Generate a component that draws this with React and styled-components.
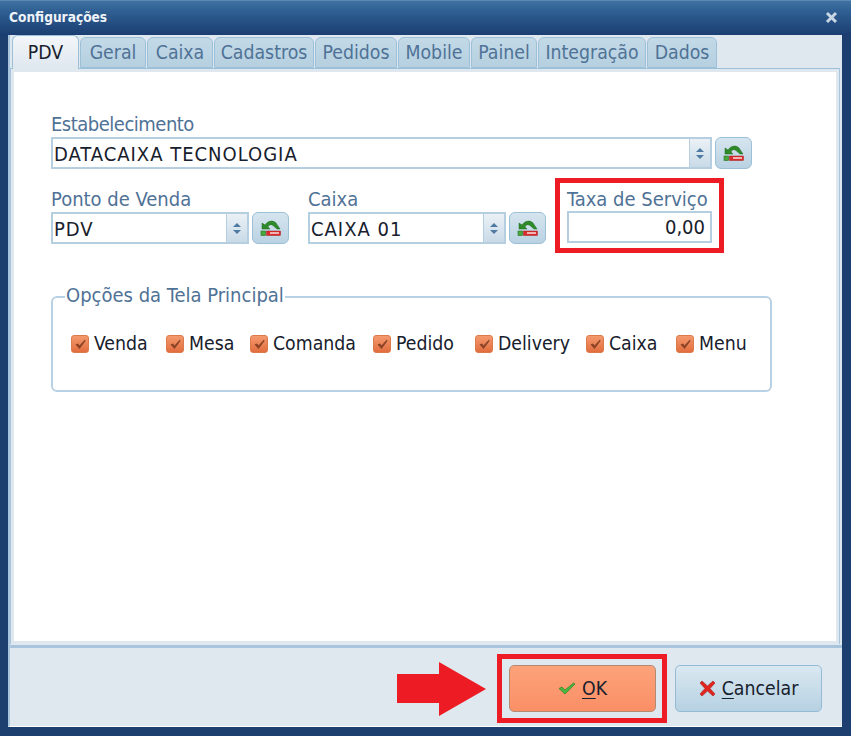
import styled, { createGlobalStyle } from "styled-components";

const GlobalStyle = createGlobalStyle`
  html, body {
    margin: 0;
    padding: 0;
    background: #1c3f70;
  }
  * {
    box-sizing: border-box;
  }
`;

const Window = styled.div`
  width: 851px;
  height: 736px;
  display: flex;
  flex-direction: column;
  background: #1c3f70;
  font-family: "DejaVu Sans", Tahoma, sans-serif;
  font-stretch: condensed;
  overflow: hidden;
`;

const TitleBar = styled.div`
  height: 35px;
  flex: none;
  display: flex;
  align-items: center;
  justify-content: space-between;
  padding: 0 13px 2px 9px;
  border-top: 1px solid #5d8ab5;
  background: linear-gradient(#3f72a3 0%, #2f5f92 30%, #1b3e72 100%);
  color: #eef3f8;
  font-size: 13.6px;
  font-weight: 700;
`;

const Body = styled.div`
  flex: 1;
  margin: 0 9px 9px 8px;
  display: flex;
  flex-direction: column;
  background: #dfe7ef;
  border-left: 2px solid #a9c5dd;
  border-bottom: 1px solid #ffffff;
`;

const TabBar = styled.div`
  height: 33px;
  flex: none;
  display: flex;
  align-items: flex-end;
  gap: 1px;
  padding-left: 2px;
`;

const Tab = styled.div`
  height: ${(p) => (p.$active ? "34px" : "31px")};
  width: ${(p) => p.$w}px;
  margin-bottom: ${(p) => (p.$active ? "-1px" : "0")};
  position: relative;
  z-index: ${(p) => (p.$active ? 1 : 0)};
  display: flex;
  align-items: center;
  justify-content: center;
  font-size: 19.3px;
  white-space: nowrap;
  color: ${(p) => (p.$active ? "#17202c" : "#4f7296")};
  background: ${(p) =>
    p.$active
      ? "linear-gradient(#f3f6f9, #dfe7ef)"
      : "linear-gradient(#c3d9e7, #b5d0e0)"};
  border: 1px solid #9cc0d8;
  border-bottom: ${(p) => (p.$active ? "none" : "1px solid #9cc0d8")};
  border-radius: 6px 6px 0 0;
`;

const Panel = styled.div`
  height: 576px;
  flex: none;
  margin-right: 2px;
  border: 1px solid #a9c5dd;
  border-top-color: #9cc0d8;
  border-bottom: none;
  padding: 3px;
  background: #dfe7ef;
`;

const PanelInner = styled.div`
  height: 100%;
  background: #fff;
  padding: 40px 36px 0 37px;
  display: flex;
  flex-direction: column;
`;

const Label = styled.div`
  font-size: 20px;
  line-height: 25px;
  letter-spacing: ${(p) => p.$spacing || "0"};
  color: #4f7296;
  white-space: nowrap;
`;

const Row = styled.div`
  display: flex;
  align-items: center;
  gap: 3px;
`;

const Combo = styled.div`
  width: ${(p) => p.$w}px;
  height: 32px;
  display: flex;
  border: 2px solid #b5cfe0;
  background: #fff;
`;

const ComboText = styled.div`
  flex: 1;
  display: flex;
  align-items: center;
  padding: 1px 0 0 1px;
  font-size: 20px;
  letter-spacing: 1px;
  color: #17202c;
  white-space: nowrap;
`;

const Spin = styled.div`
  width: 21px;
  display: flex;
  flex-direction: column;
  align-items: center;
  justify-content: center;
  gap: 3px;
  background: linear-gradient(#ebf1f6, #c9dae7);
  border-left: 1px solid #b5cfe0;
`;

const SpinUp = styled.span`
  width: 0;
  height: 0;
  border: 4px solid transparent;
  border-top: none;
  border-bottom: 4px solid #4f7ba3;
`;

const SpinDown = styled(SpinUp)`
  border-bottom: none;
  border-top: 4px solid #4f7ba3;
`;

const IconButton = styled.div`
  width: 37px;
  height: 32px;
  display: flex;
  align-items: center;
  justify-content: center;
  border: 1px solid #9cc0d8;
  border-radius: 6px;
  background: linear-gradient(#d6e5ef, #b9d2e2);
`;

const FieldsRow = styled.div`
  display: flex;
  margin-top: 9px;
  margin-bottom: 32px;
`;

const Field = styled.div`
  width: ${(p) => p.$w}px;
  margin-top: 9px;
`;

const ServiceField = styled.div`
  width: 169px;
  height: 75px;
  border: 5px solid #ed1c24;
  padding: 4px 7px 0 7px;
`;

const NumberInput = styled.div`
  width: 145px;
  height: 32px;
  margin-top: -1px;
  display: flex;
  align-items: center;
  justify-content: flex-end;
  padding-right: 5px;
  border: 2px solid #b5cfe0;
  font-size: 20px;
  color: #17202c;
`;

const Group = styled.fieldset`
  width: 721px;
  height: 107px;
  margin: 0;
  padding: 23px 0 0 18px;
  border: 2px solid #b9d1e4;
  border-radius: 6px;
  display: flex;
  align-items: flex-start;
`;

const Legend = styled.legend`
  margin-left: -6px;
  padding: 0 1px;
  font-size: 20px;
  line-height: 24px;
  color: #4f7296;
  transform: translateY(-2px);
`;

const CheckItem = styled.div`
  width: ${(p) => p.$w}px;
  display: flex;
  align-items: center;
  gap: 5px;
  font-size: 19.3px;
  color: #17202c;
  white-space: nowrap;
`;

const CheckBox = styled.span`
  width: 18px;
  height: 18px;
  flex: none;
  display: flex;
  align-items: center;
  justify-content: center;
  border: 1px solid #dc7a4c;
  border-radius: 3px;
  background: linear-gradient(#f49a6e, #e26d3e);
`;

const Footer = styled.div`
  flex: 1;
  margin-top: 1px;
  border-top: 3px solid #a9c5dd;
  display: flex;
  align-items: flex-start;
  justify-content: flex-end;
  padding: 6px 20px 0 0;
`;

const ArrowMark = styled.svg`
  display: block;
  margin: 8px 11px 0 0;
`;

const OkFrame = styled.div`
  width: 170px;
  height: 69px;
  margin-right: 8px;
  border: 5px solid #ed1c24;
  padding: 6px 6px 6px 7px;
  display: flex;
`;

const DialogButton = styled.div`
  width: 147px;
  height: 47px;
  display: flex;
  align-items: center;
  justify-content: center;
  gap: 6px;
  font-size: 19.3px;
  color: #17202c;
  border-radius: 5px;
  border: 1px solid ${(p) => (p.$primary ? "#b58a72" : "#93bbd6")};
  background: ${(p) =>
    p.$primary
      ? "linear-gradient(#fca27a, #fb8f66)"
      : "linear-gradient(#dae8f1, #b6d1e2)"};
`;

const CancelButton = styled(DialogButton)`
  margin-top: 11px;
`;

const Mnemonic = styled.span`
  text-decoration: underline;
  text-underline-offset: 3px;
`;

const RefreshIcon = () => (
  <svg width="22" height="18" viewBox="0 0 22 18">
    <path
      d="M2 4 L5 6 C8 1.5 13 1 16 4 L20 10 L17 10 L13 6.5 C11 5 9 5.5 8 8 L10 10 L2 10 Z"
      fill="#2f8a2a"
      stroke="#1f6a1c"
      strokeWidth="0.5"
    />
    <rect x="1" y="12" width="4.5" height="4.5" fill="#48a83c" stroke="#256f20" strokeWidth="0.6" />
    <rect x="6.5" y="12" width="14" height="4.5" fill="#d92b2b" stroke="#a81c1c" strokeWidth="0.5" />
    <rect x="10" y="13.2" width="9" height="1.6" fill="#f8d4d4" />
  </svg>
);

const TickIcon = () => (
  <svg width="13" height="12" viewBox="0 0 13 12">
    <path d="M1.5 6.5 L4 5.5 L5.5 7.5 L11 1.5 L11.5 3 L5.5 11 Z" fill="#8a4326" />
  </svg>
);

const OkIcon = () => (
  <svg width="18" height="13" viewBox="0 0 18 13">
    <path d="M1 6.5 L4 5 L7 8 L15.5 1 L17 2 L7 12 Z" fill="#4cb83e" stroke="#2a7f27" strokeWidth="0.7" />
  </svg>
);

const CancelIcon = () => (
  <svg width="17" height="17" viewBox="0 0 17 17">
    <path
      d="M1 3 L3 1 L8.5 6 L14 1 L16 3 L11 8.5 L16 14 L14 16 L8.5 11 L3 16 L1 14 L6 8.5 Z"
      fill="#e0261f"
      stroke="#a81c16"
      strokeWidth="0.6"
    />
  </svg>
);

const tabs = [
  ["PDV", 67],
  ["Geral", 66],
  ["Caixa", 66],
  ["Cadastros", 100],
  ["Pedidos", 82],
  ["Mobile", 72],
  ["Painel", 66],
  ["Integração", 108],
  ["Dados", 70],
];

const options = [
  ["Venda", 95],
  ["Mesa", 84],
  ["Comanda", 123],
  ["Pedido", 102],
  ["Delivery", 111],
  ["Caixa", 90],
  ["Menu", 80],
];

const App = () => (
  <Window>
    <GlobalStyle />
    <TitleBar>
      <span>Configurações</span>
      <svg width="13" height="13" viewBox="0 0 13 13">
        <path d="M2 2 L11 11 M11 2 L2 11" stroke="#c9d7e4" strokeWidth="3" />
      </svg>
    </TitleBar>
    <Body>
      <TabBar>
        {tabs.map(([name, w], i) => (
          <Tab key={name} $w={w} $active={i === 0}>
            {name}
          </Tab>
        ))}
      </TabBar>
      <Panel>
        <PanelInner>
          <Label $spacing="-0.5px">Estabelecimento</Label>
          <Row>
            <Combo $w={661}>
              <ComboText>DATACAIXA TECNOLOGIA</ComboText>
              <Spin>
                <SpinUp />
                <SpinDown />
              </Spin>
            </Combo>
            <IconButton>
              <RefreshIcon />
            </IconButton>
          </Row>
          <FieldsRow>
            <Field $w={257}>
              <Label>Ponto de Venda</Label>
              <Row>
                <Combo $w={198}>
                  <ComboText>PDV</ComboText>
                  <Spin>
                    <SpinUp />
                    <SpinDown />
                  </Spin>
                </Combo>
                <IconButton>
                  <RefreshIcon />
                </IconButton>
              </Row>
            </Field>
            <Field $w={247}>
              <Label>Caixa</Label>
              <Row>
                <Combo $w={198}>
                  <ComboText>CAIXA 01</ComboText>
                  <Spin>
                    <SpinUp />
                    <SpinDown />
                  </Spin>
                </Combo>
                <IconButton>
                  <RefreshIcon />
                </IconButton>
              </Row>
            </Field>
            <ServiceField>
              <Label>Taxa de Serviço</Label>
              <NumberInput>0,00</NumberInput>
            </ServiceField>
          </FieldsRow>
          <Group>
            <Legend>Opções da Tela Principal</Legend>
            {options.map(([name, w]) => (
              <CheckItem key={name} $w={w}>
                <CheckBox>
                  <TickIcon />
                </CheckBox>
                {name}
              </CheckItem>
            ))}
          </Group>
        </PanelInner>
      </Panel>
      <Footer>
        <ArrowMark width="89" height="54" viewBox="0 0 89 54">
          <path d="M0 12 H42 V0 L89 27 L42 54 V41 H0 Z" fill="#ed1c24" />
        </ArrowMark>
        <OkFrame>
          <DialogButton $primary>
            <OkIcon />
            <span>
              <Mnemonic>O</Mnemonic>K
            </span>
          </DialogButton>
        </OkFrame>
        <CancelButton>
          <CancelIcon />
          <span>
            <Mnemonic>C</Mnemonic>ancelar
          </span>
        </CancelButton>
      </Footer>
    </Body>
  </Window>
);

export default App;
